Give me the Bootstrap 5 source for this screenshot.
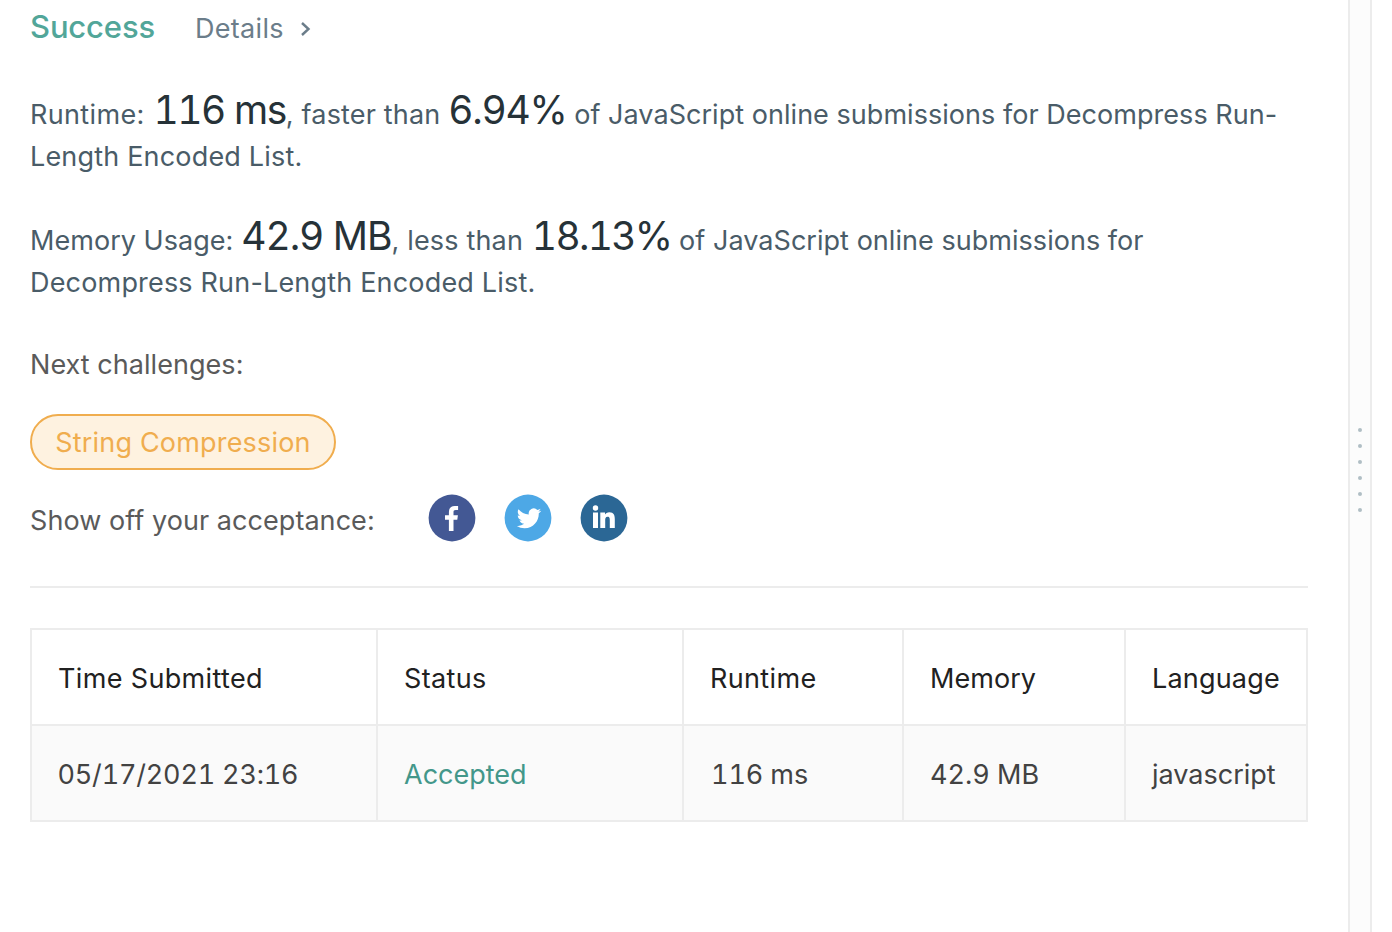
<!DOCTYPE html>
<html lang="en">
<head>
<meta charset="utf-8">
<meta name="viewport" content="width=device-width, initial-scale=1">
<title>Submission result</title>
<link rel="stylesheet" href="https://cdn.jsdelivr.net/npm/bootstrap@5.3.0/dist/css/bootstrap.min.css">
<style>
body{font-family:Inter,"Liberation Sans",sans-serif;font-size:27px;line-height:42px;color:#5a5a5a;background:#fff;letter-spacing:.18px}
.result-page{height:932px;overflow:hidden}
.result-main{width:1348px;padding:0 40px 0 30px}
.result-head{height:90px;padding-top:8px}
.result-title{font-size:31px;font-weight:500;color:#52a699;line-height:38px;width:165px;letter-spacing:-.15px}
.details-link{color:#6b7d8a;line-height:42px;letter-spacing:.3px}
.details-link svg{margin:-3px 0 0 16px}
.stat-text{color:#4a5c68;height:84px;margin-bottom:42px;white-space:nowrap}
.stat-value{font-size:39px;line-height:1;color:#263238;font-feature-settings:"tnum";letter-spacing:-1.3px}
.stat-runtime{margin-left:1px;letter-spacing:-1.45px}
.stat-memory{letter-spacing:-1.05px}
.stat-rank{letter-spacing:-1.75px;margin-left:1px}
.tight{letter-spacing:.04px}
.loose{letter-spacing:.35px}
.next-label{height:72px;padding-top:2px}
.challenge-pill{height:56px;border:2px solid #f0ad4e;background:#fef2e0;color:#f0ad4e;line-height:54px;width:306px;white-space:nowrap}
.share-row{height:48px;margin-top:24px}
.share-label{width:398px;letter-spacing:.06px;padding-top:6px}
.share-icons{gap:28px}
.rule-line{border-top:2px solid #ececec;margin-top:44px;margin-bottom:40px}
.result-table{table-layout:fixed;border-collapse:collapse;width:1278px}
.result-table>*>tr>*{border:2px solid #ececec;height:96px;padding:3px 0 0 26px;font-weight:400;white-space:nowrap;vertical-align:middle}
.result-table>thead>tr>th{color:#212121;background:#fff}
.result-table>tbody>tr>td{background:#fafafa;color:#424242;font-feature-settings:"tnum";letter-spacing:0}
.result-table>tbody>tr>td.submitted{letter-spacing:-.2px;padding-left:25.500px}
.result-table>tbody>tr>td.runtime{letter-spacing:-.1px;padding-left:27px}
.result-table>tbody>tr>td.accepted{color:#43978a}
.split-bar{width:24px;background:#fcfcfc;border-left:2px solid #ececec;border-right:2px solid #ececec;gap:12px;padding-top:8px}
.split-bar i{width:4px;height:4px;border-radius:50%;background:#b0bec5}
</style>
</head>
<body>
<div class="result-page d-flex">
<main class="result-main">
<div class="result-head d-flex"><span class="result-title">Success</span><a class="details-link text-decoration-none">Details<svg width="12" height="16" viewBox="0 0 12 16" fill="none" stroke="currentColor" stroke-width="2.4"><path d="M2 2l6.500 6L2 14"/></svg></a></div>
<p class="stat-text"><span class="loose">Runtime:</span> <span class="stat-value stat-runtime">116 ms</span><span>, faster than</span> <span class="stat-value">6.94%</span> <span class="tight">of JavaScript online submissions for Decompress Run-</span><br>Length Encoded List.</p>
<p class="stat-text"><span class="tight">Memory Usage:</span> <span class="stat-value stat-memory">42.9 MB</span>, less than <span class="stat-value stat-rank">18.13%</span> <span class="tight">of JavaScript online submissions for</span><br>Decompress Run-Length Encoded List.</p>
<div class="next-label tight">Next challenges:</div>
<a class="challenge-pill d-block rounded-pill text-decoration-none text-center">String Compression</a>
<div class="share-row d-flex align-items-center"><span class="share-label">Show off your acceptance:</span>
<div class="share-icons d-flex">
<svg width="48" height="48" viewBox="0 0 48 48"><circle cx="24" cy="24" r="23.4" fill="#435894"/><path fill="#fff" transform="translate(-.5 0)" d="M21.400 37V25.700h-3.900v-4.400h3.900v-3.400c0-3.900 2.300-6 5.800-6 1.600 0 3 .1 3.400.2v4h-2.300c-1.900 0-2.300.9-2.300 2.200v3h4.400l-.6 4.400H26V37z"/></svg>
<svg width="48" height="48" viewBox="0 0 48 48"><circle cx="24" cy="24" r="23.4" fill="#4da8e6"/><path fill="#fff" transform="translate(12.8 12) scale(1.02)" d="M23.95 4.57a10 10 0 01-2.82.78 4.96 4.96 0 002.16-2.73c-.95.56-2 .96-3.13 1.19a4.92 4.92 0 00-8.38 4.48C7.69 8.1 4.07 6.13 1.64 3.16a4.92 4.92 0 001.52 6.57 4.9 4.9 0 01-2.23-.61v.06a4.92 4.92 0 003.95 4.83 5 5 0 01-2.21.08 4.94 4.94 0 004.6 3.42A9.87 9.87 0 010 19.54a13.99 13.99 0 007.55 2.21c9.05 0 14-7.5 14-13.98 0-.21 0-.42-.02-.63a9.94 9.94 0 002.42-2.57z"/></svg>
<svg width="48" height="48" viewBox="0 0 48 48"><circle cx="24" cy="24" r="23.4" fill="#2b6795"/><path fill="#fff" d="M13 18.600h5V34h-5zM15.500 11.300a2.700 2.700 0 110 5.400 2.700 2.700 0 010-5.400zM20.300 18.600h4.700v2c.7-1.300 2.200-2.400 4.400-2.400 4.400 0 5.400 3 5.400 6.800v9h-5v-7.500c0-1.800 0-3.800-2.200-3.800s-2.400 1.900-2.400 3.700V34h-4.900z"/></svg>
</div></div>
<div class="rule-line"></div>
<table class="table result-table mb-0">
<colgroup><col style="width:346px"><col style="width:306px"><col style="width:220px"><col style="width:222px"><col style="width:182px"></colgroup>
<thead><tr><th><span class="loose">Time Submitted</span></th><th><span class="loose">Status</span></th><th><span class="loose">Runtime</span></th><th><span class="tight">Memory</span></th><th>Language</th></tr></thead>
<tbody><tr><td class="submitted">05/17/2021 23:16</td><td class="accepted">Accepted</td><td class="runtime">116 ms</td><td>42.9 MB</td><td>javascript</td></tr></tbody>
</table>
</main>
<div class="split-bar d-flex flex-column align-items-center justify-content-center"><i></i><i></i><i></i><i></i><i></i><i></i></div>
</div>
<script src="https://cdn.jsdelivr.net/npm/bootstrap@5.3.0/dist/js/bootstrap.bundle.min.js"></script>
</body>
</html>
